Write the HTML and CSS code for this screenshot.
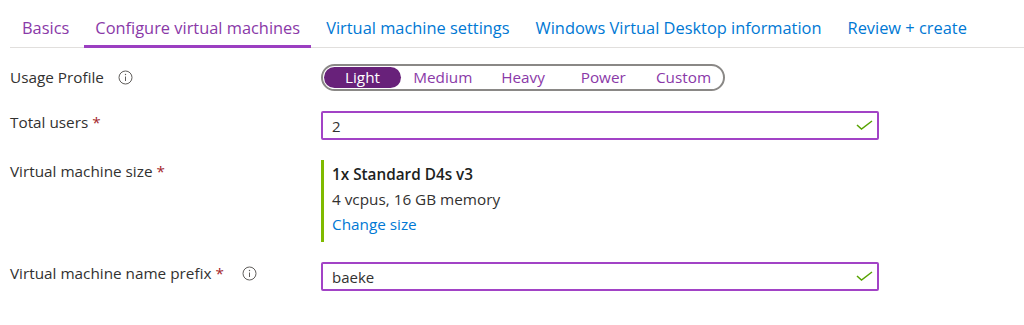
FILE: index.html
```
<!DOCTYPE html>
<html lang="en">
<head>
    <meta charset="UTF-8">
    <title>Create a host pool</title>
    <link rel="stylesheet" href="styles.css">
</head>
<body>
    <nav class="tabs">
        <a class="tab done">Basics</a>
        <a class="tab active">Configure virtual machines</a>
        <a class="tab">Virtual machine settings</a>
        <a class="tab">Windows Virtual Desktop information</a>
        <a class="tab">Review + create</a>
    </nav>

    <form class="form">
        <div class="row">
            <div class="lbl mid">Usage Profile
                <svg class="info" width="15" height="15" viewBox="0 0 15 15"><circle cx="7.5" cy="7.5" r="6.5" fill="none" stroke="#605e5c" stroke-width="1"/><line x1="7.5" y1="6.5" x2="7.5" y2="11" stroke="#605e5c" stroke-width="1"/><circle cx="7.5" cy="4.5" r="0.7" fill="#605e5c"/></svg>
            </div>
            <div class="seg">
                <span class="opt sel">Light</span>
                <span class="opt">Medium</span>
                <span class="opt">Heavy</span>
                <span class="opt">Power</span>
                <span class="opt">Custom</span>
            </div>
        </div>

        <div class="row">
            <div class="lbl">Total users <span class="req">*</span></div>
            <div class="field">
                <input class="ipt" type="text" value="2">
                <svg class="ok" width="18" height="10" viewBox="0 0 18 10"><polyline points="1,5 5.5,9 16,1" fill="none" stroke="#57a300" stroke-width="1.5"/></svg>
            </div>
        </div>

        <div class="row">
            <div class="lbl">Virtual machine size <span class="req">*</span></div>
            <div class="size">
                <div class="sizeName">1x Standard D4s v3</div>
                <div>4 vcpus, 16 GB memory</div>
                <a class="link">Change size</a>
            </div>
        </div>

        <div class="row">
            <div class="lbl">Virtual machine name prefix <span class="req">*</span>
                <svg class="info wide" width="15" height="15" viewBox="0 0 15 15"><circle cx="7.5" cy="7.5" r="6.5" fill="none" stroke="#605e5c" stroke-width="1"/><line x1="7.5" y1="6.5" x2="7.5" y2="11" stroke="#605e5c" stroke-width="1"/><circle cx="7.5" cy="4.5" r="0.7" fill="#605e5c"/></svg>
            </div>
            <div class="field">
                <input class="ipt" type="text" value="baeke">
                <svg class="ok" width="18" height="10" viewBox="0 0 18 10"><polyline points="1,5 5.5,9 16,1" fill="none" stroke="#57a300" stroke-width="1.5"/></svg>
            </div>
        </div>
    </form>
</body>
</html>
```

FILE: styles.css
```
body{
    margin: 0;
    background: #ffffff;
    font-family: "Open Sans", "Noto Sans", sans-serif;
    color: #323130;
}
.tabs{
    display: flex;
    gap: 4px;
    margin-left: 10px;
    padding-left: 1px;
    border-bottom: 1px solid #e1dfdd;
    font-size: 16.4px;
}
.tab{
    padding: 18px 11px 7px;
    line-height: 20px;
    border-bottom: 3px solid transparent;
    margin-bottom: -1px;
    color: #0078d4;
    white-space: nowrap;
}
.tab.done{
    color: #8a39a8;
}
.tab.active{
    color: #8a39a8;
    border-bottom-color: #9b3fc1;
}

.form{
    padding: 16px 0 0 10px;
    font-size: 15.3px;
}
.row{
    display: flex;
    align-items: flex-start;
    margin-bottom: 20px;
}
.lbl{
    width: 311px;
    flex: none;
    line-height: 20px;
    padding-top: 1px;
    white-space: nowrap;
}
.lbl.mid{
    padding-top: 3px;
}
.req{
    color: #a4262c;
}
.info{
    vertical-align: -2px;
    margin-left: 10px;
}
.info.wide{
    margin-left: 14px;
}

.seg{
    display: flex;
    justify-content: space-between;
    width: 398px;
    height: 21px;
    padding: 1px;
    border: 2px solid #8a8886;
    border-radius: 14px;
}
.opt{
    width: 77px;
    text-align: center;
    line-height: 21px;
    color: #8a39a8;
    border-radius: 11px;
}
.opt.sel{
    background: #68217a;
    color: #ffffff;
}

.field{
    position: relative;
    width: 558px;
}
.ipt{
    box-sizing: border-box;
    width: 100%;
    height: 29px;
    margin: 0;
    padding: 0 30px 0 9px;
    border: 2px solid #a243c6;
    border-radius: 2px;
    font-family: inherit;
    font-size: 15px;
    color: #323130;
    outline: none;
}
.ok{
    position: absolute;
    right: 5px;
    top: 9px;
}

.size{
    border-left: 3px solid #7fba00;
    padding: 2px 0 5px 8px;
    line-height: 25px;
}
.sizeName{
    font-weight: 600;
    color: #201f1e;
}
.link{
    color: #0078d4;
}
```
